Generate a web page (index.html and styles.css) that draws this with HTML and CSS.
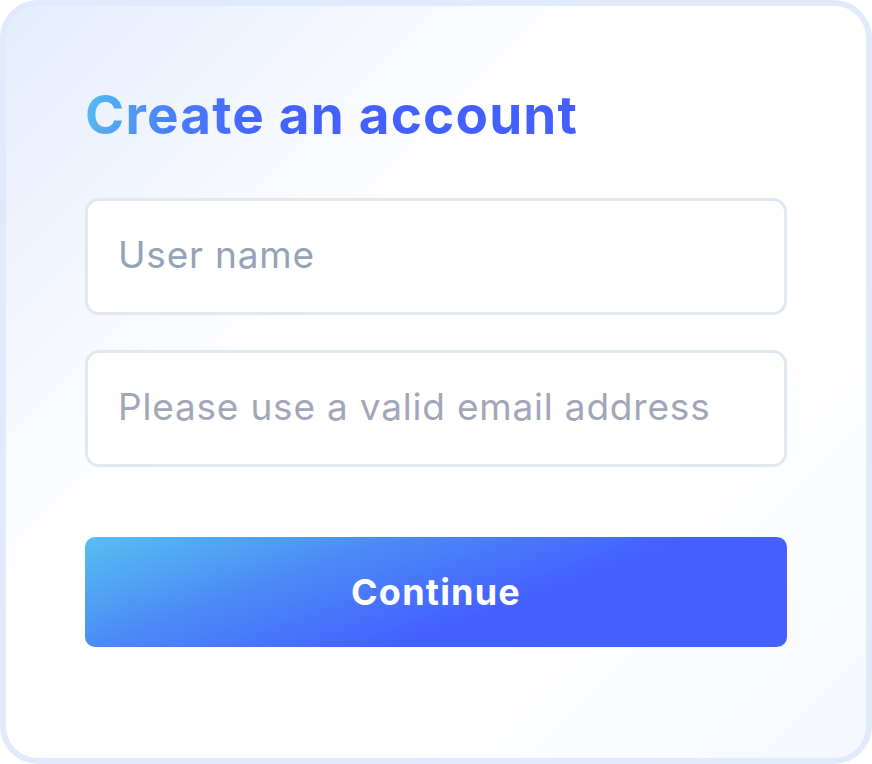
FILE: index.html
```html
<!DOCTYPE html>
<html lang="en">
<head>
  <meta charset="UTF-8">
  <meta name="viewport" content="width=device-width, initial-scale=1.0">
  <title>Create an account</title>
  <link rel="stylesheet" href="styles.css">
</head>
<body>
  <div class="card">
    <h1 class="title">Create an account</h1>
    <form class="form" onsubmit="return false">
      <input class="field" type="text" placeholder="User name">
      <input class="field field-email" type="email" placeholder="Please use a valid email address">
      <button class="submit" type="submit">Continue</button>
    </form>
  </div>
</body>
</html>
```

FILE: styles.css
```css
html, body {
  margin: 0;
  height: 100%;
}
body {
  background: #fff;
  font-family: 'Inter', 'Open Sans', sans-serif;
}
.card {
  box-sizing: border-box;
  height: 764px;
  width: 872px;
  border: 6px solid #e1eafd;
  border-radius: 38px;
  background:
    linear-gradient(135deg, #e4ecfd 0%, #ffffff 38%, #ffffff 70%, #f4f8ff 100%);
  padding: 80px 79px 0 79px;
}
.title {
  margin: 0 0 54px;
  font-size: 53px;
  font-weight: 700;
  letter-spacing: 1.2px;
  line-height: 58px;
  background: linear-gradient(100deg, #56bdf0 0%, #4a80f8 18%, #4562ff 38%, #4360ff 100%);
  -webkit-background-clip: text;
  background-clip: text;
  color: transparent;
  display: inline-block;
}
.form {
  display: flex;
  flex-direction: column;
  gap: 35px;
}
.field {
  box-sizing: border-box;
  height: 117px;
  border: 3px solid #e2e8f0;
  border-radius: 14px;
  background: #fff;
  padding: 0 30px 5px;
  font-family: inherit;
  font-size: 37px;
  letter-spacing: 0.8px;
  outline: none;
}
.field::placeholder {
  color: #94a3b8;
}
.field-email::placeholder {
  color: #a3a6b8;
}
.submit {
  margin-top: 35px;
  height: 110px;
  border: none;
  border-radius: 10px;
  background: linear-gradient(160deg, #57bff0 0%, #4c8cf6 30%, #4461ff 60%, #4460ff 100%);
  color: #fff;
  font-family: inherit;
  font-size: 36px;
  font-weight: 700;
  letter-spacing: 1.2px;
  cursor: pointer;
}
```
